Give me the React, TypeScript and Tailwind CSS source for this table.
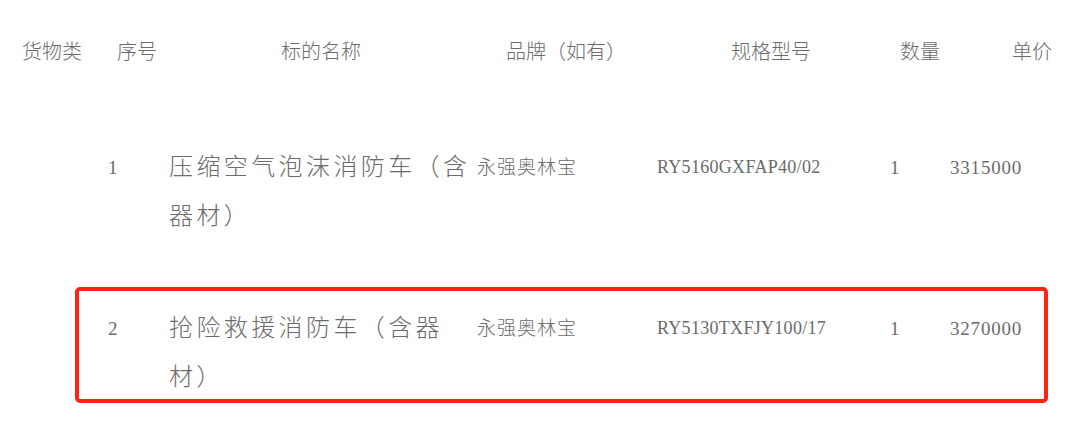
const cjk = "font-['Noto_Sans_CJK_SC',sans-serif]";
const latin = "font-['Liberation_Serif','Noto_Sans_CJK_SC',serif]";

type Row = {
  no: string;
  name: string;
  brand: string;
  model: string;
  qty: string;
  price: string;
  highlight?: boolean;
};

const rows: Row[] = [
  {
    no: "1",
    name: "压缩空气泡沫消防车（含器材）",
    brand: "永强奥林宝",
    model: "RY5160GXFAP40/02",
    qty: "1",
    price: "3315000",
  },
  {
    no: "2",
    name: "抢险救援消防车（含器材）",
    brand: "永强奥林宝",
    model: "RY5130TXFJY100/17",
    qty: "1",
    price: "3270000",
    highlight: true,
  },
];

function ItemRow({ row }: { row: Row }) {
  return (
    <div
      className={
        "ml-[75px] flex w-[973px] items-start rounded-[5px] border-4 pt-[10px] " +
        (row.highlight ? "border-[#ff2314]" : "border-transparent")
      }
    >
      <div
        className={`${latin} w-[90px] pl-[29px] pt-[3px] text-[19px] leading-[49px]`}
      >
        {row.no}
      </div>
      <div
        className={`${cjk} w-[308px] text-[24px] font-light leading-[49px] tracking-[3.4px]`}
      >
        {row.name}
      </div>
      <div
        className={`${cjk} w-[180px] pt-[1px] text-[19px] font-light leading-[49px] tracking-[1px]`}
      >
        {row.brand}
      </div>
      <div
        className={`${latin} w-[233px] pt-[3px] text-[18px] leading-[49px] tracking-[0.3px]`}
      >
        {row.model}
      </div>
      <div className={`${latin} w-[60px] pt-[3px] text-[19px] leading-[49px]`}>
        {row.qty}
      </div>
      <div
        className={`${latin} pt-[3px] text-[19px] leading-[49px] tracking-[0.8px]`}
      >
        {row.price}
      </div>
    </div>
  );
}

export default function App() {
  return (
    <div className="h-[433px] w-[1080px] overflow-hidden bg-white text-[#6b6b6b]">
      <div className={`${cjk} flex pt-[40px] text-[20px] font-light leading-[22px]`}>
        <span className="w-[117px] pl-[22px]">货物类</span>
        <span className="w-[164px]">序号</span>
        <span className="w-[225px]">标的名称</span>
        <span className="w-[225px]">品牌（如有）</span>
        <span className="w-[169px]">规格型号</span>
        <span className="w-[112px]">数量</span>
        <span>单价</span>
      </div>
      <div className="mt-[64px] flex flex-col gap-[45px]">
        {rows.map((row) => (
          <ItemRow key={row.no} row={row} />
        ))}
      </div>
    </div>
  );
}
